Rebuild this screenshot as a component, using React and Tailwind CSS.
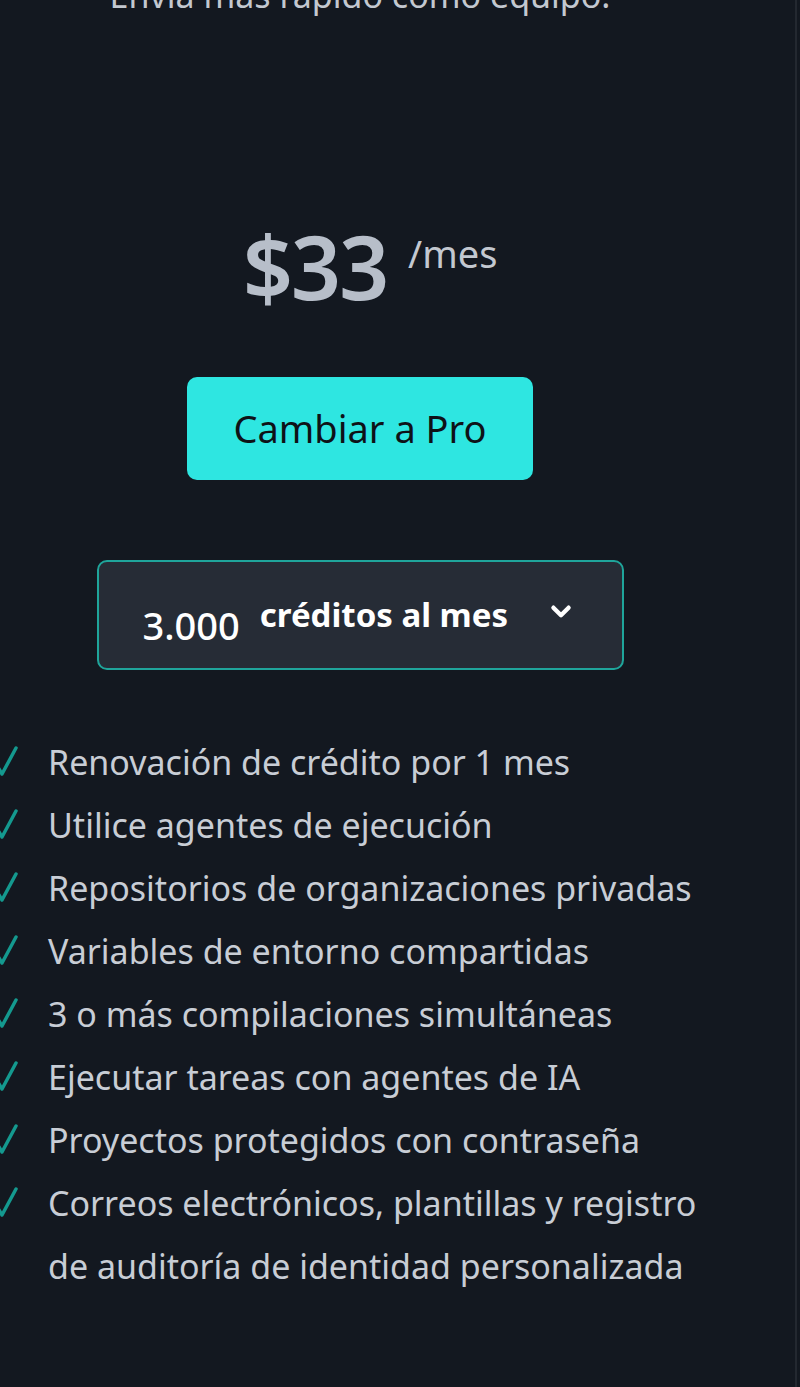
import React from 'react';

const features = [
  'Renovación de crédito por 1 mes',
  'Utilice agentes de ejecución',
  'Repositorios de organizaciones privadas',
  'Variables de entorno compartidas',
  '3 o más compilaciones simultáneas',
  'Ejecutar tareas con agentes de IA',
  'Proyectos protegidos con contraseña',
  'Correos electrónicos, plantillas y registro de auditoría de identidad personalizada',
];

const Check = () => (
  <svg viewBox="0 0 24 34" className="w-[24px] h-[34px] shrink-0" fill="none">
    <path d="M2 20 L8 30 L22 4" stroke="#14998f" strokeWidth="3.5" strokeLinecap="round" strokeLinejoin="round" />
  </svg>
);

const App = () => {
  return (
    <div
      className="w-[800px] h-[1387px] overflow-hidden bg-[#131820] flex"
      style={{ fontFamily: '"Noto Sans", "Open Sans", sans-serif' }}
    >
      <div className="w-[795px] flex flex-col">
        <div className="w-[720px] flex flex-col items-center">
          <p className="-mt-[30px] text-[34px] leading-[50px] text-[#c3c8d0]">Envía más rápido como equipo.</p>

          <div className="mt-[200px] ml-[20px] flex items-start">
            <span className="text-[88px] leading-[92px] font-semibold text-[#b7bec9] tracking-tight">$33</span>
            <span className="ml-[21px] mt-[13px] text-[38px] leading-[40px] text-[#c3c8d0]">/mes</span>
          </div>

          <button className="mt-[65px] w-[346px] h-[103px] rounded-[10px] bg-[#2ee6e1] text-[38px] text-[#0e1217]">
            Cambiar a Pro
          </button>

          <div className="mt-[80px] w-[527px] h-[110px] rounded-[10px] border-2 border-[#1fa59b] bg-[#262c36] flex items-center pl-[44px] pr-[48px]">
            <span className="mt-[20px] text-[38px] font-medium text-white">3.000</span>
            <span className="ml-[20px] text-[33px] font-bold text-white">créditos al mes</span>
            <svg viewBox="0 0 24 24" className="ml-auto w-[26px] h-[26px] -mt-[6px]" fill="none">
              <path d="M5 8 L12 15 L19 8" stroke="white" strokeWidth="4" strokeLinecap="round" strokeLinejoin="round" />
            </svg>
          </div>

          <ul className="mt-[61px] self-start -ml-[6px] w-[710px] flex flex-col">
            {features.map((f) => (
              <li key={f} className="flex items-start gap-[30px]">
                <span className="pt-[13px]"><Check /></span>
                <span className="text-[34px] leading-[63px] text-[#c8cdd5] w-[660px]">{f}</span>
              </li>
            ))}
          </ul>
        </div>
      </div>
      <div className="w-[2px] h-full bg-[#232830]"></div>
    </div>
  );
};

export default App;
